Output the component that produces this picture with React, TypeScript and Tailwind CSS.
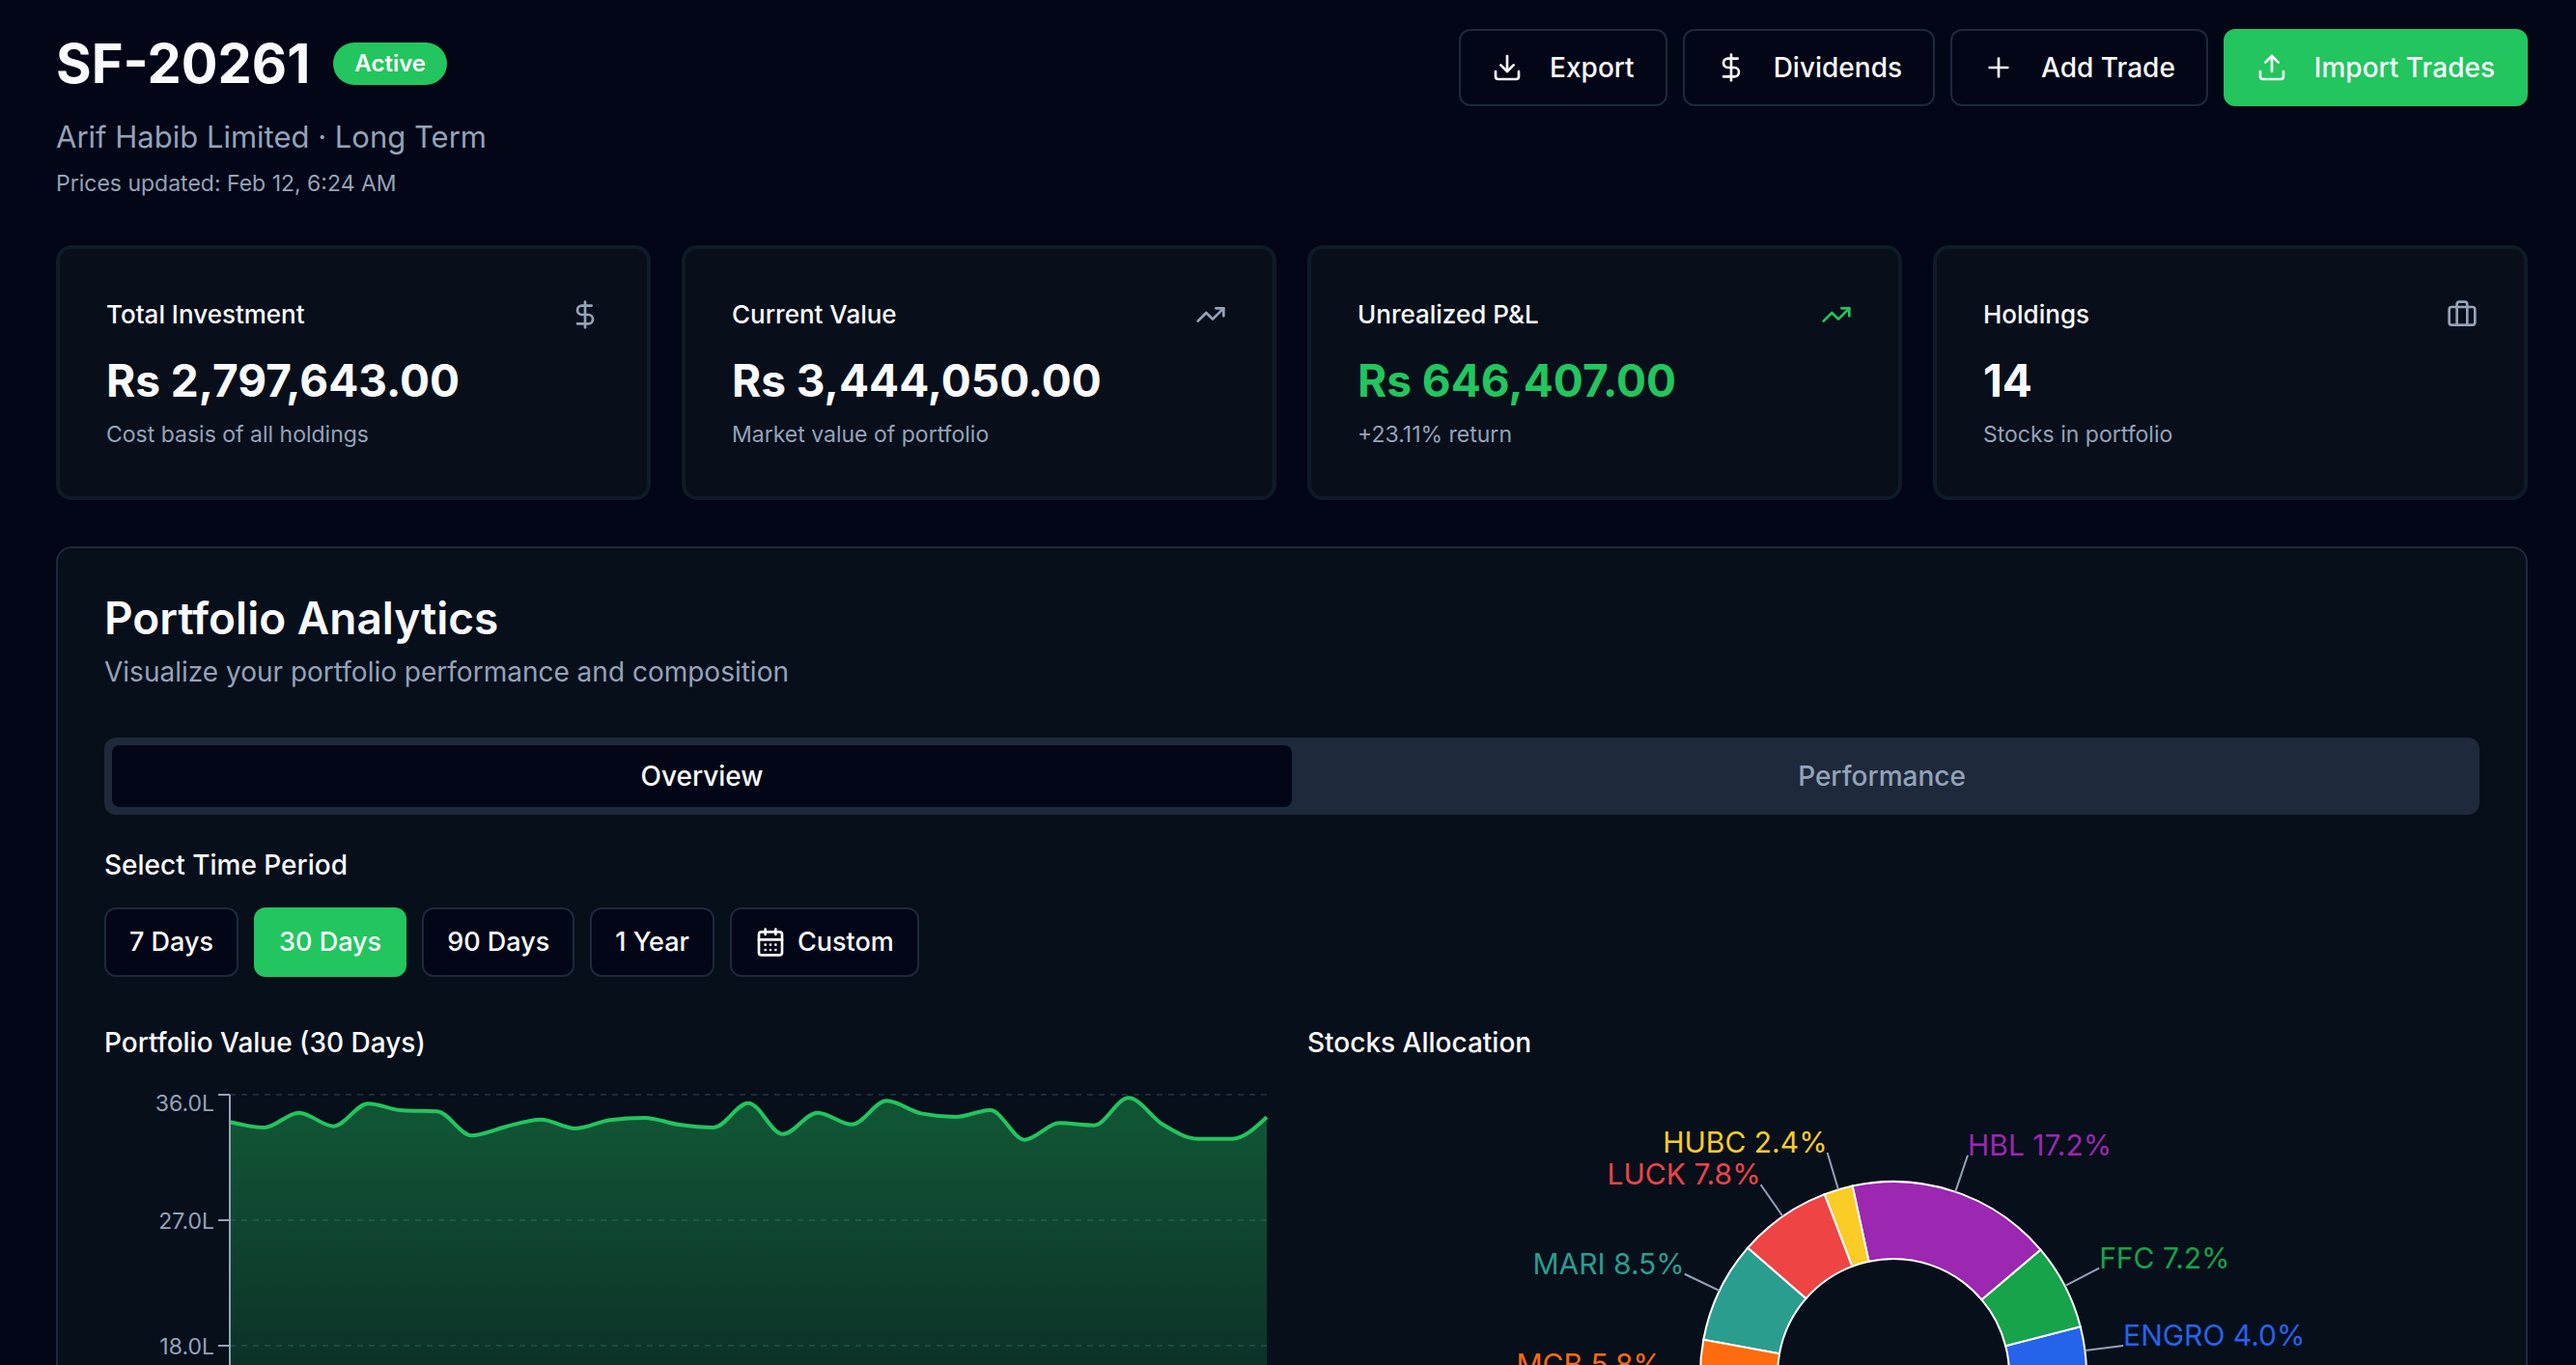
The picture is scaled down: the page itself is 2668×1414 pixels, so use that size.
import {
  Briefcase,
  CalendarDays,
  DollarSign,
  Download,
  Plus,
  TrendingUp,
  Upload,
  type LucideIcon,
} from "lucide-react";
import { useState } from "react";

const actions = [
  { name: "Export", icon: Download, primary: false },
  { name: "Dividends", icon: DollarSign, primary: false },
  { name: "Add Trade", icon: Plus, primary: false },
  { name: "Import Trades", icon: Upload, primary: true },
];

const stats = [
  {
    title: "Total Investment",
    value: "Rs 2,797,643.00",
    note: "Cost basis of all holdings",
    icon: DollarSign,
    positive: false,
  },
  {
    title: "Current Value",
    value: "Rs 3,444,050.00",
    note: "Market value of portfolio",
    icon: TrendingUp,
    positive: false,
  },
  {
    title: "Unrealized P&L",
    value: "Rs 646,407.00",
    note: "+23.11% return",
    icon: TrendingUp,
    positive: true,
  },
  {
    title: "Holdings",
    value: "14",
    note: "Stocks in portfolio",
    icon: Briefcase,
    positive: false,
  },
];

const periods = ["7 Days", "30 Days", "90 Days", "1 Year"];

// Daily portfolio value in lakhs
const history = [
  34.04, 33.65, 34.71, 33.74, 35.36, 34.87, 34.8, 33.07, 33.72, 34.22, 33.58,
  34.18, 34.34, 33.85, 33.65, 35.4, 33.18, 34.71, 33.87, 35.56, 34.66, 34.41,
  34.89, 32.77, 33.97, 33.81, 35.77, 33.85, 32.84, 32.84, 34.39,
];

const allocation = [
  { name: "ENGRO", value: 4.0, color: "#2563eb" },
  { name: "FFC", value: 7.2, color: "#16a34a" },
  { name: "HBL", value: 17.2, color: "#9c27b0" },
  { name: "HUBC", value: 2.4, color: "#facc25" },
  { name: "LUCK", value: 7.8, color: "#ef4444" },
  { name: "MARI", value: 8.5, color: "#2a9d8f" },
  { name: "MCB", value: 5.8, color: "#ff6b0f" },
  { name: "Others", value: 47.1, color: "#64748b" },
];

// Monotone cubic interpolation through evenly spaced points
function monotonePath(points: [number, number][]) {
  const n = points.length;
  const h = points[1][0] - points[0][0];
  const slopes = points.slice(1).map((p, i) => (p[1] - points[i][1]) / h);
  const tangents = points.map((_, i) => {
    if (i === 0 || i === n - 1) return 0;
    const a = slopes[i - 1];
    const b = slopes[i];
    return (
      (Math.sign(a) + Math.sign(b)) *
      Math.min(Math.abs(a), Math.abs(b), 0.5 * Math.abs((a + b) / 2))
    );
  });
  tangents[0] = (3 * slopes[0] - tangents[1]) / 2;
  tangents[n - 1] = (3 * slopes[n - 2] - tangents[n - 2]) / 2;

  let d = `M${points[0][0]},${points[0][1]}`;
  for (let i = 1; i < n; i++) {
    const [x0, y0] = points[i - 1];
    const [x1, y1] = points[i];
    d += `C${x0 + h / 3},${y0 + (tangents[i - 1] * h) / 3},${x1 - h / 3},${
      y1 - (tangents[i] * h) / 3
    },${x1},${y1}`;
  }
  return d;
}

function ValueChart() {
  const left = 130;
  const right = 1204;
  const top = 10;
  const bottom = 530;
  const max = 36;
  const ticks = [36, 27, 18, 9, 0];
  const toY = (v: number) => bottom - (v / max) * (bottom - top);
  const step = (right - left) / (history.length - 1);
  const line = monotonePath(
    history.map((v, i) => [left + i * step, toY(v)] as [number, number])
  );

  return (
    <svg viewBox="0 0 1214 600" className="block w-full" role="img" aria-label="Portfolio value">
      <defs>
        <linearGradient id="value" x1="0" y1="0" x2="0" y2="1">
          <stop offset="5%" stopColor="#22c55e" stopOpacity={0.38} />
          <stop offset="95%" stopColor="#22c55e" stopOpacity={0.03} />
        </linearGradient>
      </defs>
      {ticks.map((tick) => (
        <line
          key={tick}
          x1={left}
          x2={right}
          y1={toY(tick)}
          y2={toY(tick)}
          stroke="#1e293b"
          strokeWidth={2}
          strokeDasharray="6 6"
        />
      ))}
      <path d={`${line}L${right},${bottom}L${left},${bottom}Z`} fill="url(#value)" />
      <path d={line} fill="none" stroke="#22c55e" strokeWidth={4} />
      <path
        d={`M${left},${top}V${bottom}H${right}`}
        fill="none"
        stroke="#94a3b8"
        strokeWidth={2}
      />
      {ticks.map((tick) => (
        <g key={tick}>
          <line
            x1={left - 12}
            x2={left}
            y1={toY(tick)}
            y2={toY(tick)}
            stroke="#94a3b8"
            strokeWidth={2}
          />
          <text
            x={left - 16}
            y={toY(tick) + (tick === max ? 17 : 9)}
            textAnchor="end"
            fill="#94a3b8"
            fontSize={23}
          >
            {tick.toFixed(1)}L
          </text>
        </g>
      ))}
    </svg>
  );
}

function AllocationChart() {
  const cx = 607;
  const cy = 300;
  const at = (percent: number, r: number) => {
    const angle = (percent / 100) * Math.PI * 2;
    return [cx + r * Math.cos(angle), cy - r * Math.sin(angle)];
  };
  let total = 0;
  const slices = allocation.map((item) => {
    const start = total;
    total += item.value;
    return { ...item, start, end: total, mid: (start + total) / 2 };
  });

  return (
    <svg viewBox="0 0 1214 600" className="block w-full" role="img" aria-label="Stocks allocation">
      {slices.map((s) => {
        const [ax, ay] = at(s.start, 200);
        const [bx, by] = at(s.end, 200);
        const [ix, iy] = at(s.end, 120);
        const [jx, jy] = at(s.start, 120);
        const [lx, ly] = at(s.mid, 200);
        const [tx, ty] = at(s.mid, 240);
        return (
          <g key={s.name}>
            <path
              d={`M${ax},${ay}A200,200,0,0,0,${bx},${by}L${ix},${iy}A120,120,0,0,1,${jx},${jy}Z`}
              fill={s.color}
              stroke="#ffffff"
              strokeWidth={2}
            />
            <line x1={lx} y1={ly} x2={tx} y2={ty} stroke="#94a3b8" strokeWidth={2} />
            <text
              x={tx}
              y={ty}
              textAnchor={tx > cx ? "start" : "end"}
              fill={s.color}
              fontSize={30}
            >
              {s.name} {s.value.toFixed(1)}%
            </text>
          </g>
        );
      })}
    </svg>
  );
}

function StatCard({
  title,
  value,
  note,
  icon: Icon,
  positive,
}: {
  title: string;
  value: string;
  note: string;
  icon: LucideIcon;
  positive: boolean;
}) {
  return (
    <div className="rounded-2xl border-4 border-[#0f1b27] bg-[#080f1b] p-12">
      <div className="flex h-10 items-center justify-between">
        <h3 className="text-[26px] leading-9 font-medium">{title}</h3>
        <Icon className={`size-8 ${positive ? "text-[#22c55e]" : "text-[#94a3b8]"}`} />
      </div>
      <p className={`mt-4 text-[46px] leading-16 font-bold ${positive ? "text-[#22c55e]" : ""}`}>
        {value}
      </p>
      <p className="mt-2 text-[23px] leading-8 text-[#94a3b8]">{note}</p>
    </div>
  );
}

export default function App() {
  const [tab, setTab] = useState("Overview");
  const [period, setPeriod] = useState("30 Days");

  return (
    <main className="h-screen overflow-y-auto bg-[#020617] pt-[30px] pr-[50px] pb-12 pl-[58px] font-['Inter',sans-serif] text-[#f8fafc] [scrollbar-width:none]">
      <header className="flex items-start justify-between">
        <div>
          <div className="flex h-18 items-center gap-6">
            <h1 className="text-[56px] leading-18 font-bold">SF-20261</h1>
            <span className="flex h-11 items-center rounded-full bg-[#22c55e] px-[22px] text-2xl font-semibold">
              Active
            </span>
          </div>
          <p className="mt-4 text-[31px] leading-12 text-[#94a3b8]">
            Arif Habib Limited · Long Term
          </p>
          <p className="mt-2 text-[23px] leading-8 text-[#94a3b8]">
            Prices updated: Feb 12, 6:24 AM
          </p>
        </div>
        <div className="flex gap-4">
          {actions.map(({ name, icon: Icon, primary }) => (
            <button
              key={name}
              type="button"
              className={`flex h-20 items-center gap-7 rounded-xl border-2 px-8 text-[28px] font-medium ${
                primary ? "border-[#22c55e] bg-[#22c55e]" : "border-[#1e293b]"
              }`}
            >
              <Icon className="size-8" />
              {name}
            </button>
          ))}
        </div>
      </header>

      <section className="mt-12 grid grid-cols-4 gap-8">
        {stats.map((stat) => (
          <StatCard key={stat.title} {...stat} />
        ))}
      </section>

      <section className="mt-12 rounded-2xl border-2 border-[#1e293b] bg-[#070f1b] p-12">
        <h2 className="text-[46px] leading-12 font-semibold">Portfolio Analytics</h2>
        <p className="mt-3 text-[28px] leading-10 text-[#94a3b8]">
          Visualize your portfolio performance and composition
        </p>

        <div role="tablist" className="mt-12 grid h-20 grid-cols-2 rounded-xl bg-[#1e293b] p-2">
          {["Overview", "Performance"].map((name) => (
            <button
              key={name}
              type="button"
              role="tab"
              aria-selected={tab === name}
              onClick={() => setTab(name)}
              className={`rounded-lg text-[28px] font-medium ${
                tab === name ? "bg-[#020617]" : "text-[#94a3b8]"
              }`}
            >
              {name}
            </button>
          ))}
        </div>

        <p className="mt-8 text-[28px] leading-10 font-medium">Select Time Period</p>
        <div className="mt-6 flex gap-4">
          {periods.map((name) => (
            <button
              key={name}
              type="button"
              onClick={() => setPeriod(name)}
              className={`h-18 rounded-xl border-2 px-6 text-[27px] font-medium ${
                period === name
                  ? "border-[#22c55e] bg-[#22c55e]"
                  : "border-[#1e293b] bg-[#020617]"
              }`}
            >
              {name}
            </button>
          ))}
          <button
            type="button"
            className="flex h-18 items-center gap-3 rounded-xl border-2 border-[#1e293b] bg-[#020617] px-6 text-[27px] font-medium"
          >
            <CalendarDays className="size-8" />
            Custom
          </button>
        </div>

        <div className="mt-12 grid grid-cols-2 gap-8">
          <div>
            <h3 className="mb-6 text-[28px] leading-10 font-medium">
              Portfolio Value ({period})
            </h3>
            <ValueChart />
          </div>
          <div>
            <h3 className="mb-6 text-[28px] leading-10 font-medium">Stocks Allocation</h3>
            <AllocationChart />
          </div>
        </div>
      </section>
    </main>
  );
}
